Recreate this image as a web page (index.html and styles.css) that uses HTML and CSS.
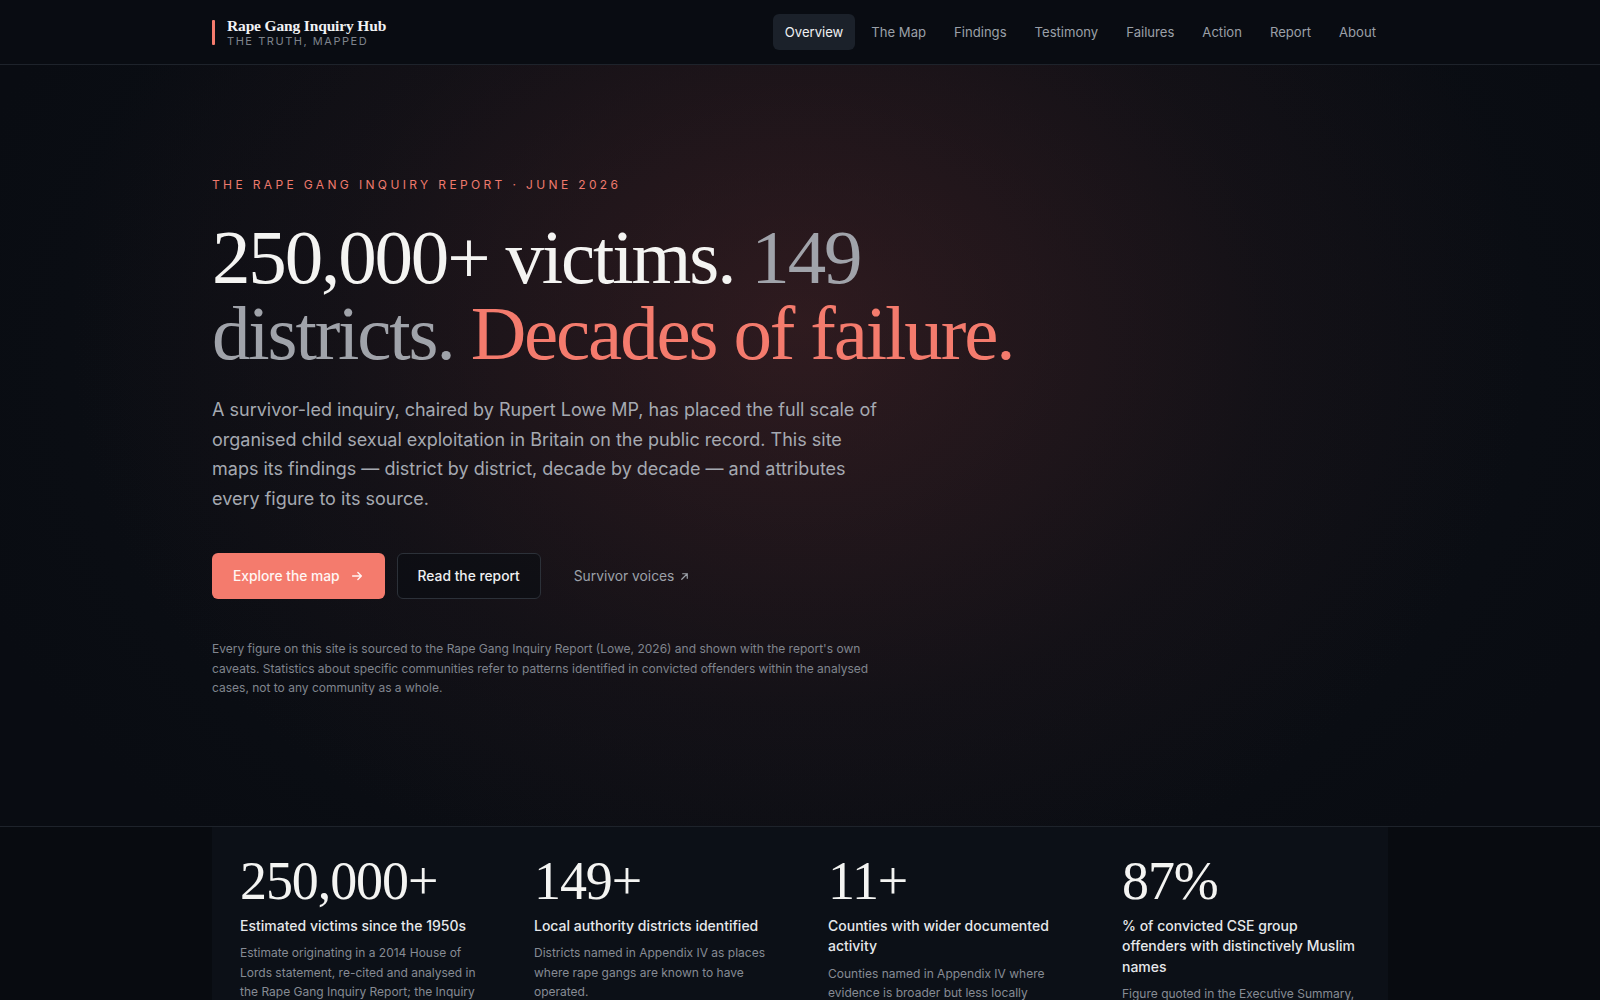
FILE: index.html
```html
<!DOCTYPE html>
<html lang="en">
<head>
	<meta charset="utf-8">
	<meta name="viewport" content="width=device-width, initial-scale=1">
	<title>Rape Gang Inquiry Hub</title>
	<link rel="stylesheet" href="styles.css">
</head>
<body>

<header class="site-header">
	<div class="container header-inner">
		<a class="brand" href="#">
			<span class="brand-bar"></span>
			<span class="brand-text">
				<span class="brand-name">Rape Gang Inquiry Hub</span>
				<span class="brand-tag">The truth, mapped</span>
			</span>
		</a>
		<nav class="main-nav">
			<a class="nav-link active" href="#">Overview</a>
			<a class="nav-link" href="#">The Map</a>
			<a class="nav-link" href="#">Findings</a>
			<a class="nav-link" href="#">Testimony</a>
			<a class="nav-link" href="#">Failures</a>
			<a class="nav-link" href="#">Action</a>
			<a class="nav-link" href="#">Report</a>
			<a class="nav-link" href="#">About</a>
		</nav>
	</div>
</header>

<main>
	<section class="hero">
		<div class="container">
			<p class="eyebrow">The Rape Gang Inquiry Report &middot; June 2026</p>
			<h1 class="hero-title">
				<span class="title-line"><span class="t-light">250,000+ victims.</span> <span class="t-muted">149</span></span>
				<span class="title-line"><span class="t-muted">districts.</span> <span class="t-accent">Decades of failure.</span></span>
			</h1>
			<p class="hero-lead">A survivor-led inquiry, chaired by Rupert Lowe MP, has placed the full scale of organised child sexual exploitation in Britain on the public record. This site maps its findings &mdash; district by district, decade by decade &mdash; and attributes every figure to its source.</p>

			<div class="hero-actions">
				<a class="btn btn-primary" href="#">Explore the map
					<svg class="icon" width="14" height="14" viewBox="0 0 16 16" fill="none" stroke="currentColor" stroke-width="1.6" stroke-linecap="round" stroke-linejoin="round"><path d="M3 8h10M9 4l4 4-4 4"/></svg>
				</a>
				<a class="btn btn-outline" href="#">Read the report</a>
				<a class="btn btn-ghost" href="#">Survivor voices
					<svg class="icon-sm" width="11" height="11" viewBox="0 0 12 12" fill="none" stroke="currentColor" stroke-width="1.3" stroke-linecap="round" stroke-linejoin="round"><path d="M3 9l6-6M4 3h5v5"/></svg>
				</a>
			</div>

			<p class="hero-note">Every figure on this site is sourced to the Rape Gang Inquiry Report (Lowe, 2026) and shown with the report's own caveats. Statistics about specific communities refer to patterns identified in convicted offenders within the analysed cases, not to any community as a whole.</p>
		</div>
	</section>

	<section class="stats">
		<div class="container">
			<div class="stats-grid">
				<div class="stat">
					<div class="stat-value">250,000+</div>
					<div class="stat-label">Estimated victims since the 1950s</div>
					<p class="stat-desc">Estimate originating in a 2014 House of Lords statement, re-cited and analysed in the Rape Gang Inquiry Report; the Inquiry treats it as an indicative order of magnitude.</p>
				</div>
				<div class="stat">
					<div class="stat-value">149+</div>
					<div class="stat-label">Local authority districts identified</div>
					<p class="stat-desc">Districts named in Appendix IV as places where rape gangs are known to have operated.</p>
				</div>
				<div class="stat">
					<div class="stat-value">11+</div>
					<div class="stat-label">Counties with wider documented activity</div>
					<p class="stat-desc">Counties named in Appendix IV where evidence is broader but less locally specific.</p>
				</div>
				<div class="stat">
					<div class="stat-value">87%</div>
					<div class="stat-label">% of convicted CSE group offenders with distinctively Muslim names</div>
					<p class="stat-desc">Figure quoted in the Executive Summary, drawn from the convicted cases analysed.</p>
				</div>
			</div>
		</div>
	</section>
</main>

</body>
</html>
```

FILE: styles.css
```css
:root {
	--bg: #090c12;
	--panel: #0c1017;
	--line: #1e232b;
	--text: #eceef1;
	--muted: #a5a9b1;
	--accent: #f47b6d;
	--serif: "Liberation Serif", "DejaVu Serif", serif;
	--sans: Inter, "Noto Sans", "Liberation Sans", sans-serif;
}

* {
	box-sizing: border-box;
}

html, body {
	margin: 0;
	padding: 0;
}

body {
	background: var(--bg);
	color: var(--text);
	font-family: var(--sans);
	-webkit-font-smoothing: antialiased;
}

a {
	color: inherit;
	text-decoration: none;
}

.container {
	max-width: 1240px;
	margin: 0 auto;
	padding: 0 32px;
}

/* Header */
.site-header {
	background: #090c12;
	border-bottom: 1px solid var(--line);
}

.header-inner {
	height: 64px;
	display: flex;
	align-items: center;
	justify-content: space-between;
}

.brand {
	display: flex;
	align-items: center;
	gap: 12px;
}

.brand-bar {
	width: 3px;
	height: 25px;
	border-radius: 1px;
	background: var(--accent);
}

.brand-text {
	display: flex;
	flex-direction: column;
}

.brand-name {
	font-family: var(--serif);
	font-weight: 700;
	font-size: 15.5px;
	line-height: 17px;
	color: #f1f2f4;
	letter-spacing: -0.01em;
}

.brand-tag {
	font-size: 11px;
	line-height: 14px;
	letter-spacing: 0.14em;
	text-transform: uppercase;
	color: #7e838c;
}

.main-nav {
	display: flex;
	gap: 4px;
}

.nav-link {
	padding: 8px 12px;
	font-size: 13.1px;
	line-height: 20px;
	color: #9ba0a8;
	border-radius: 6px;
}

.nav-link.active {
	background: #1b212a;
	color: #eef0f3;
}

/* Hero */
.hero {
	padding: 112px 0 128px;
	border-bottom: 1px solid var(--line);
	background:
		radial-gradient(ellipse 860px 700px at 50% 34%, rgba(95, 40, 42, 0.4), rgba(55, 28, 32, 0.18) 55%, transparent 85%),
		radial-gradient(ellipse 1100px 800px at 50% 40%, #0f1218, #090c12 80%);
}

.eyebrow {
	margin: 0;
	font-size: 12px;
	line-height: 16px;
	letter-spacing: 0.28em;
	text-transform: uppercase;
	color: #ee7a6d;
}

.hero-title {
	margin: 26px 0 0;
	font-family: var(--serif);
	font-weight: 400;
	font-size: 77px;
	line-height: 76px;
	letter-spacing: -0.028em;
}

.title-line {
	display: block;
}

.t-light {
	color: #f4f4f2;
}

.t-muted {
	color: #a0a3aa;
}

.t-accent {
	color: var(--accent);
}

.hero-lead {
	margin: 24px 0 0;
	max-width: 672px;
	font-size: 18px;
	line-height: 29.5px;
	color: var(--muted);
}

.hero-actions {
	margin-top: 40px;
	display: flex;
	align-items: center;
	gap: 12px;
}

.btn {
	display: inline-flex;
	align-items: center;
	gap: 10px;
	padding: 12px 20px;
	font-size: 13.8px;
	line-height: 20px;
	font-weight: 500;
	border: 1px solid transparent;
	border-radius: 6px;
}

.btn-primary {
	background: var(--accent);
	color: #fff6f4;
}

.btn-outline {
	border-color: #2c3139;
	background: rgba(10, 13, 18, 0.6);
	color: #eef0f2;
}

.btn-ghost {
	gap: 5px;
	font-weight: 400;
	color: #9ca1a9;
}

.hero-note {
	margin: 40px 0 0;
	max-width: 672px;
	font-size: 12px;
	line-height: 19.5px;
	color: #80858e;
}

/* Stats */
.stats {
	background: #080b10;
}

.stats-grid {
	display: grid;
	grid-template-columns: repeat(4, 1fr);
	background: var(--panel);
}

.stat {
	padding: 28px;
}

.stat-value {
	font-family: var(--serif);
	font-size: 54px;
	line-height: 52px;
	letter-spacing: -0.02em;
	color: #f4f4f2;
}

.stat-label {
	margin-top: 9px;
	font-size: 14px;
	line-height: 20.5px;
	font-weight: 500;
	color: #e6e8eb;
}

.stat-desc {
	margin: 7px 0 0;
	font-size: 12px;
	line-height: 19.5px;
	color: #868b94;
}
```
